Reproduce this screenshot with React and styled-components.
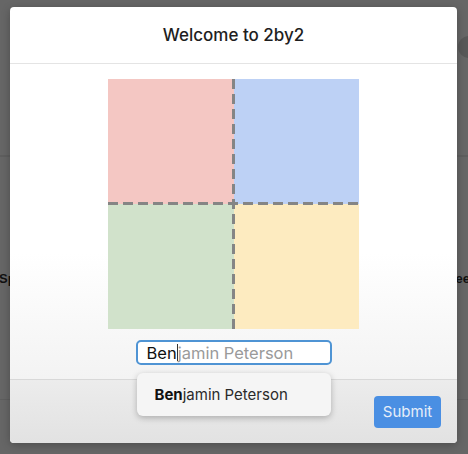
import styled, { createGlobalStyle } from "styled-components";

const GlobalStyle = createGlobalStyle`
  html, body {
    margin: 0;
    padding: 0;
    background: #666666;
  }
  body {
    font-family: "Liberation Sans", Arial, sans-serif;
  }
`;

const App = () => (
  <Page>
    <GlobalStyle />
    <Behind>
      <BehindRow />
      <BehindRow tall>
        <BehindText>Sprint</BehindText>
        <BehindText>Speed</BehindText>
      </BehindRow>
      <BehindRow />
    </Behind>
    <CloseDot />
    <Modal>
      <Header>
        <Title>Welcome to 2by2</Title>
      </Header>
      <Body>
        <Quadrants>
          <Cell color="#f4c7c3" />
          <Cell color="#bdd1f5" />
          <Cell color="#d1e2cb" />
          <Cell color="#fdebc0" />
          <VLine />
          <HLine />
        </Quadrants>
        <Field>
          <NameInput>
            <Typed>Ben</Typed>
            <Caret />
            <Hint>jamin Peterson</Hint>
          </NameInput>
          <Suggestions>
            <Suggestion>
              <b>Ben</b>jamin Peterson
            </Suggestion>
          </Suggestions>
        </Field>
      </Body>
      <Footer>
        <SubmitButton>Submit</SubmitButton>
      </Footer>
    </Modal>
  </Page>
);

const Page = styled.div`
  position: relative;
  width: 468px;
  height: 454px;
  overflow: hidden;
  background: #666666;
`;

const Behind = styled.div`
  display: flex;
  flex-direction: column;
  padding-top: 155px;
`;

const BehindRow = styled.div`
  display: flex;
  justify-content: space-between;
  align-items: center;
  height: ${(props) => (props.tall ? "242px" : "0")};
  border-top: 1px solid #5e5e5e;
  margin: 0 -10px 0 -1px;
`;

const BehindText = styled.span`
  font-size: 13px;
  font-weight: bold;
  color: #111;
`;

const CloseDot = styled.div`
  position: absolute;
  top: 36px;
  right: -12px;
  width: 22px;
  height: 22px;
  border-radius: 50%;
  background: #585858;
`;

const Modal = styled.div`
  position: absolute;
  left: 10px;
  top: 7px;
  width: 447px;
  height: 436px;
  display: flex;
  flex-direction: column;
  background: #ffffff;
  border-radius: 4px;
  overflow: hidden;
  box-shadow: 0 2px 8px rgba(0, 0, 0, 0.25);
`;

const Header = styled.div`
  height: 56px;
  display: flex;
  align-items: center;
  justify-content: center;
  border-bottom: 1px solid #e4e4e4;
`;

const Title = styled.h1`
  margin: 0;
  font-family: Inter, "Liberation Sans", sans-serif;
  font-size: 17px;
  font-weight: 500;
  color: #1e1e1e;
`;

const Body = styled.div`
  flex: 1;
  display: flex;
  flex-direction: column;
  align-items: center;
  padding-top: 15px;
  background: linear-gradient(#ffffff 60%, #f3f3f3);
`;

const Quadrants = styled.div`
  position: relative;
  width: 251px;
  height: 250px;
  display: grid;
  grid-template-columns: 126px 125px;
  grid-template-rows: 125px 125px;
`;

const Cell = styled.div`
  background: ${(props) => props.color};
`;

const VLine = styled.div`
  position: absolute;
  left: 124px;
  top: 0;
  bottom: 0;
  width: 3px;
  background: repeating-linear-gradient(
    to bottom,
    #858585 0 10px,
    transparent 10px 15px
  );
`;

const HLine = styled.div`
  position: absolute;
  top: 123px;
  left: 0;
  right: 0;
  height: 3px;
  background: repeating-linear-gradient(
    to right,
    #858585 0 10px,
    transparent 10px 15px
  );
`;

const Field = styled.div`
  position: relative;
  margin-top: 11px;
`;

const NameInput = styled.div`
  box-sizing: border-box;
  width: 196px;
  height: 25px;
  display: flex;
  align-items: center;
  padding: 0 9px;
  border: 2px solid #4f94d4;
  border-radius: 5px;
  background: #fff;
  font-family: Inter, "Liberation Sans", sans-serif;
  font-size: 16.5px;
  white-space: nowrap;
`;

const Typed = styled.span`
  color: #111;
`;

const Caret = styled.span`
  display: inline-block;
  width: 1px;
  height: 17px;
  background: #333;
`;

const Hint = styled.span`
  color: #9a9a9a;
`;

const Suggestions = styled.div`
  position: absolute;
  top: 33px;
  left: 1px;
  width: 194px;
  height: 43px;
  display: flex;
  align-items: center;
  background: #f5f5f5;
  border-radius: 6px;
  box-shadow: 0 2px 6px rgba(0, 0, 0, 0.25);
  z-index: 2;
`;

const Suggestion = styled.div`
  padding-left: 18px;
  font-family: Inter, "Liberation Sans", sans-serif;
  font-size: 15px;
  color: #2a2a2a;

  b {
    font-weight: 700;
    color: #111;
  }
`;

const Footer = styled.div`
  height: 63px;
  display: flex;
  align-items: center;
  justify-content: flex-end;
  padding: 0 16px;
  border-top: 1px solid #d8d8d8;
  background: linear-gradient(#ececec, #e2e2e2);
`;

const SubmitButton = styled.button`
  width: 67px;
  height: 32px;
  border: none;
  border-radius: 4px;
  background: #4a8fe3;
  color: #e6eef9;
  font-family: Inter, "Liberation Sans", sans-serif;
  font-size: 15px;
  cursor: pointer;
`;

export default App;
